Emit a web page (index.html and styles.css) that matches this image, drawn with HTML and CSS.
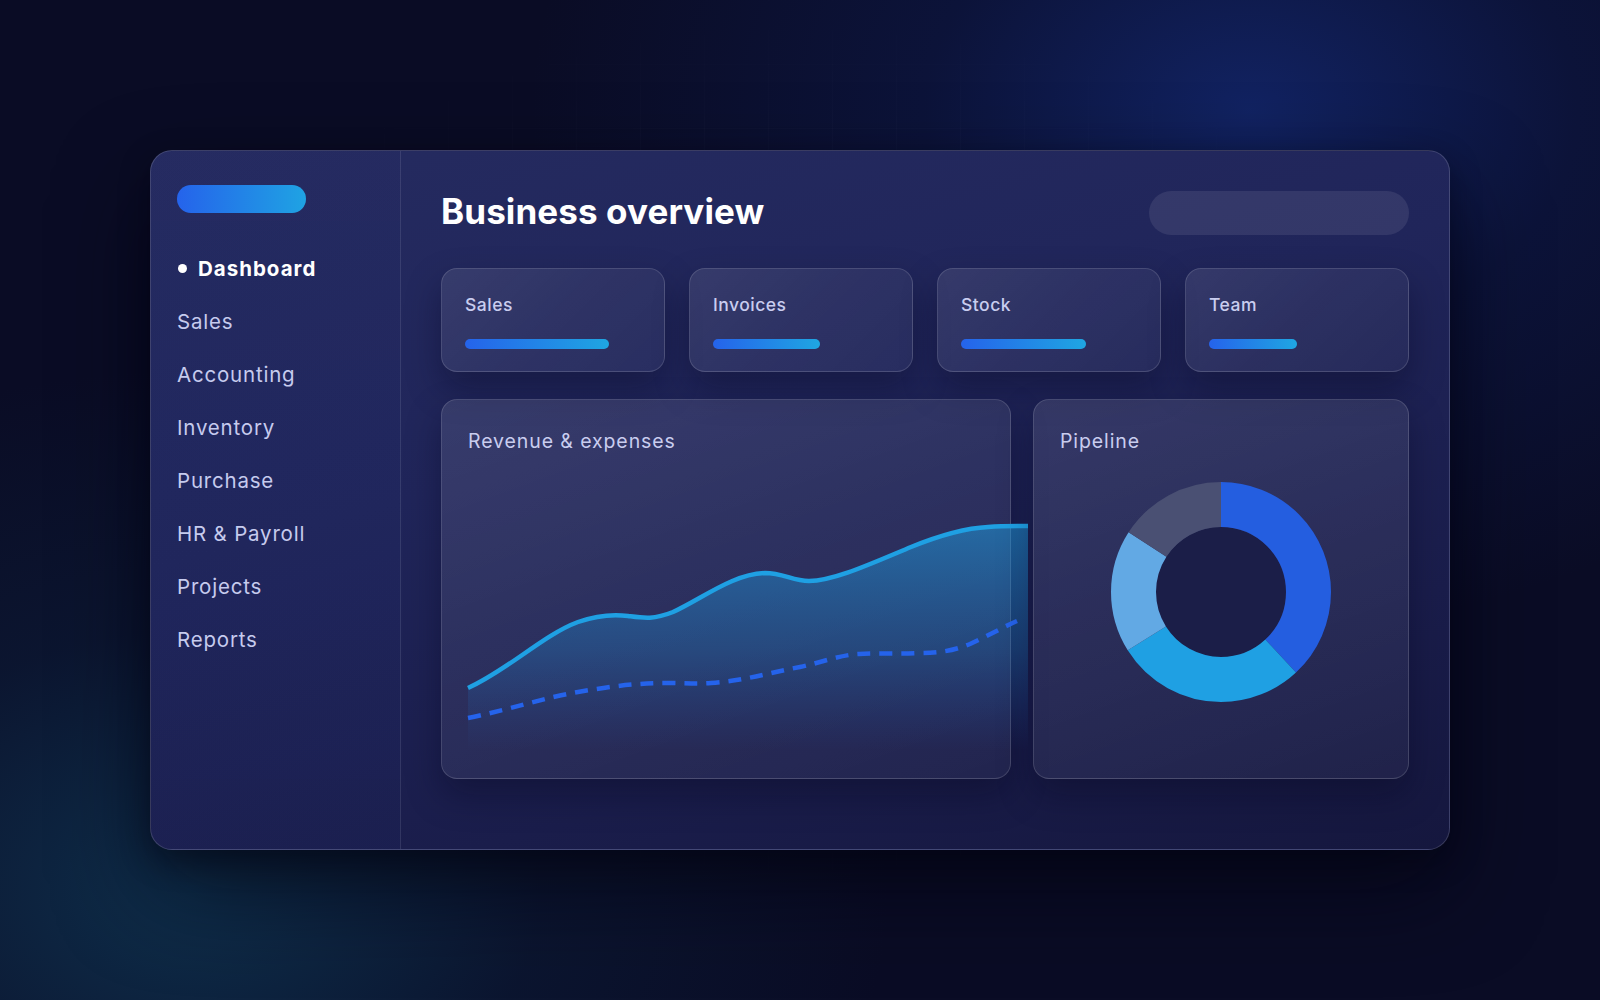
FILE: index.html
```html
<!DOCTYPE html>
<html lang="en">
<head>
<meta charset="utf-8">
<title>Business overview</title>
<link rel="stylesheet" href="styles.css">
</head>
<body>
<div class="bg-grid"></div>
<div class="window">
  <aside class="sidebar">
    <div class="logo"></div>
    <nav class="nav">
      <div class="nav-item active"><span class="dot"></span>Dashboard</div>
      <div class="nav-item">Sales</div>
      <div class="nav-item">Accounting</div>
      <div class="nav-item">Inventory</div>
      <div class="nav-item">Purchase</div>
      <div class="nav-item">HR &amp; Payroll</div>
      <div class="nav-item">Projects</div>
      <div class="nav-item">Reports</div>
    </nav>
  </aside>
  <main class="main">
    <header class="header">
      <h1 class="title">Business overview</h1>
      <div class="search"></div>
    </header>
    <section class="stats">
      <div class="card stat">
        <div class="stat-label">Sales</div>
        <div class="bar" style="width:82%"></div>
      </div>
      <div class="card stat">
        <div class="stat-label">Invoices</div>
        <div class="bar" style="width:61%"></div>
      </div>
      <div class="card stat">
        <div class="stat-label">Stock</div>
        <div class="bar" style="width:71%"></div>
      </div>
      <div class="card stat">
        <div class="stat-label">Team</div>
        <div class="bar" style="width:50%"></div>
      </div>
    </section>
    <section class="charts">
      <div class="card chart-card">
        <div class="card-title">Revenue &amp; expenses</div>
        <svg class="line-chart" width="560" height="280" viewBox="0 0 560 280">
          <defs>
            <linearGradient id="areaFill" gradientUnits="userSpaceOnUse" x1="0" y1="56" x2="0" y2="280">
              <stop offset="0" stop-color="#1fa0e3" stop-opacity="0.52"/>
              <stop offset="0.55" stop-color="#1f8fd8" stop-opacity="0.28"/>
              <stop offset="1" stop-color="#1f6fd0" stop-opacity="0"/>
            </linearGradient>
          </defs>
          <path fill="url(#areaFill)" d="M0,218 C40,200 75,165 110,152 C130,145 145,144 160,146 C175,148 185,150 205,142 C235,128 265,104 297,103 C315,103 325,111 341,111 C365,111 400,95 443,77 C475,64 500,58 520,57 C535,56 550,56 560,56 L560,280 L0,280 Z"/>
          <path fill="none" stroke="#1fa0e3" stroke-width="4.5" d="M0,218 C40,200 75,165 110,152 C130,145 145,144 160,146 C175,148 185,150 205,142 C235,128 265,104 297,103 C315,103 325,111 341,111 C365,111 400,95 443,77 C475,64 500,58 520,57 C535,56 550,56 560,56"/>
          <path fill="none" stroke="#2563eb" stroke-width="4.5" stroke-dasharray="13 9" d="M0,248 C40,240 75,228 110,222 C145,216 170,213 199,213 C215,213 228,214 243,213 C275,211 300,203 332,197 C355,192 372,185 391,184 C410,183 430,184 450,183 C470,183 485,181 502,174 C520,166 535,157 549,151"/>
        </svg>
      </div>
      <div class="card chart-card pipeline">
        <div class="card-title">Pipeline</div>
        <div class="donut-wrap">
          <svg class="donut" width="220" height="220" viewBox="0 0 220 220">
            <circle cx="110" cy="110" r="65" fill="#1b1e48"/>
            <g transform="rotate(-90 110 110)" fill="none" stroke-width="45">
              <circle cx="110" cy="110" r="87.5" stroke="#245ee0" stroke-dasharray="208.9 340.9" stroke-dashoffset="0"/>
              <circle cx="110" cy="110" r="87.5" stroke="#1fa0e3" stroke-dasharray="153.9 395.9" stroke-dashoffset="-208.9"/>
              <circle cx="110" cy="110" r="87.5" stroke="#62a9e4" stroke-dasharray="99 450.8" stroke-dashoffset="-362.8"/>
              <circle cx="110" cy="110" r="87.5" stroke="#4a5073" stroke-dasharray="88 461.8" stroke-dashoffset="-461.8"/>
            </g>
          </svg>
        </div>
      </div>
    </section>
  </main>
</div>
</body>
</html>
```

FILE: styles.css
```css
* { box-sizing: border-box; }

html, body {
  margin: 0;
  height: 1000px;
  overflow: hidden;
}

body {
  position: relative;
  font-family: "Inter", "Noto Sans", sans-serif;
  background-color: #0a0c25;
  background-image:
    radial-gradient(720px 520px at 1250px 110px, rgba(20, 42, 118, 0.75), rgba(16, 34, 100, 0.32) 45%, transparent 100%),
    radial-gradient(700px 520px at 190px 890px, rgba(16, 58, 88, 0.75), rgba(14, 42, 72, 0.3) 50%, transparent 100%);
  padding-top: 150px;
}

.bg-grid {
  position: absolute;
  inset: 0;
  background-image:
    linear-gradient(rgba(255, 255, 255, 0.022) 1px, transparent 1px),
    linear-gradient(90deg, rgba(255, 255, 255, 0.022) 1px, transparent 1px);
  background-size: 64px 64px;
  -webkit-mask-image: radial-gradient(900px 600px at 800px 450px, #000 40%, transparent 80%);
  mask-image: radial-gradient(900px 600px at 800px 450px, #000 40%, transparent 80%);
  pointer-events: none;
}

.window {
  position: relative;
  width: 1300px;
  height: 700px;
  margin: 0 auto;
  display: grid;
  grid-template-columns: 250px 1fr;
  border-radius: 22px;
  border: 1px solid rgba(255, 255, 255, 0.15);
  background: linear-gradient(165deg, #252b60 0%, #20255a 40%, #1a1d4b 75%, #15173e 100%);
  box-shadow: 0 40px 90px rgba(3, 4, 16, 0.6), 0 10px 30px rgba(3, 4, 16, 0.4);
  overflow: hidden;
}

/* Sidebar */
.sidebar {
  padding: 34px 26px;
  border-right: 1px solid rgba(255, 255, 255, 0.1);
  background: linear-gradient(180deg, rgba(40, 60, 140, 0.04), rgba(40, 60, 140, 0.06));
}

.logo {
  width: 129px;
  height: 28px;
  border-radius: 14px;
  background: linear-gradient(90deg, #2563eb, #1fa3e3);
}

.nav {
  margin-top: 29px;
  display: flex;
  flex-direction: column;
}

.nav-item {
  height: 53px;
  display: flex;
  align-items: center;
  font-size: 20.5px;
  font-weight: 400;
  letter-spacing: 0.8px;
  color: #c6cbee;
}

.nav-item.active {
  color: #ffffff;
  font-weight: 700;
  letter-spacing: 1px;
}

.dot {
  width: 9px;
  height: 9px;
  border-radius: 50%;
  background: #ffffff;
  margin-right: 11px;
  margin-left: 1px;
}

/* Main */
.main {
  padding: 40px 40px;
  display: flex;
  flex-direction: column;
}

.header {
  height: 44px;
  display: flex;
  align-items: center;
  justify-content: space-between;
}

.title {
  margin: 0 0 4px 0;
  font-size: 35px;
  line-height: 40px;
  font-weight: 700;
  color: #ffffff;
  letter-spacing: 0.1px;
}

.search {
  width: 260px;
  height: 44px;
  border-radius: 22px;
  background: rgba(255, 255, 255, 0.085);
}

.card {
  border-radius: 16px;
  border: 1px solid rgba(255, 255, 255, 0.14);
  background: linear-gradient(135deg, rgba(255, 255, 255, 0.095) 0%, rgba(255, 255, 255, 0.06) 50%, rgba(255, 255, 255, 0.04) 100%);
  box-shadow: 0 16px 34px rgba(6, 7, 28, 0.35);
}

.stats {
  margin-top: 33px;
  display: grid;
  grid-template-columns: repeat(4, 1fr);
  gap: 24px;
}

.stat {
  height: 104px;
  padding: 25px 23px;
}

.stat-label {
  font-size: 17.5px;
  line-height: 22px;
  font-weight: 500;
  letter-spacing: 0.5px;
  color: #c9cdef;
}

.bar {
  margin-top: 23px;
  height: 10px;
  border-radius: 5px;
  background: linear-gradient(90deg, #2563eb, #1fa6e2);
}

.charts {
  margin-top: 27px;
  display: grid;
  grid-template-columns: 570px 1fr;
  gap: 22px;
}

.chart-card {
  height: 380px;
  padding: 28px 26px;
  overflow: visible;
  background: linear-gradient(160deg, rgba(255, 255, 255, 0.1) 0%, rgba(255, 255, 255, 0.07) 45%, rgba(255, 255, 255, 0.045) 100%);
}

.card-title {
  font-size: 19.5px;
  line-height: 26px;
  font-weight: 400;
  letter-spacing: 0.9px;
  color: #c9cdef;
}

.line-chart {
  display: block;
  margin-top: 16px;
  overflow: visible;
}

.donut-wrap {
  margin-top: 28px;
  display: flex;
  justify-content: center;
}

.donut {
  display: block;
}
```
